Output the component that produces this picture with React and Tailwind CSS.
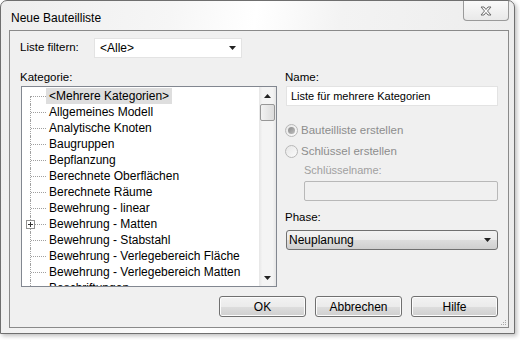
import React from "react";

const categories = [
	"<Mehrere Kategorien>",
	"Allgemeines Modell",
	"Analytische Knoten",
	"Baugruppen",
	"Bepflanzung",
	"Berechnete Oberflächen",
	"Berechnete Räume",
	"Bewehrung - linear",
	"Bewehrung - Matten",
	"Bewehrung - Stabstahl",
	"Bewehrung - Verlegebereich Fläche",
	"Bewehrung - Verlegebereich Matten",
	"Beschriftungen",
];

const Arrow = ({ up }) => (
	<svg width="7" height="4" viewBox="0 0 7 4">
		<path d={up ? "M0 4 L3.5 0 L7 4 Z" : "M0 0 L7 0 L3.5 4 Z"} fill="#222" />
	</svg>
);

const TreeRow = ({ label, index }) => (
	<div className="flex h-[16px] items-center">
		<div className="relative h-[16px] w-[24px] shrink-0">
			<div
				className={`absolute left-[8px] w-0 border-l border-dotted border-[#a0a0a0] ${
					index === 0 ? "top-[8px] h-[8px]" : "top-0 h-[16px]"
				}`}
			/>
			<div className="absolute left-[9px] top-[8px] h-0 w-[15px] border-t border-dotted border-[#a0a0a0]" />
			{label === "Bewehrung - Matten" && (
				<div className="absolute left-[4px] top-[4px] flex h-[9px] w-[9px] items-center justify-center border border-[#919191] bg-white">
					<div className="relative h-[5px] w-[5px]">
						<div className="absolute left-0 top-[2px] h-[1px] w-[5px] bg-[#333]" />
						<div className="absolute left-[2px] top-0 h-[5px] w-[1px] bg-[#333]" />
					</div>
				</div>
			)}
		</div>
		<span
			className={`whitespace-nowrap px-[3px] leading-[16px] ${
				index === 0 ? "bg-[#dedede]" : ""
			}`}
		>
			{label}
		</span>
	</div>
);

const Radio = ({ checked, label }) => (
	<div className="flex h-[21px] items-center">
		<div className="flex h-[13px] w-[13px] items-center justify-center rounded-full border border-[#b8b8b8] bg-gradient-to-br from-[#e6e6e6] to-[#fbfbfb]">
			{checked && (
				<div className="h-[7px] w-[7px] rounded-full bg-gradient-to-br from-[#8c8c8c] to-[#bdbdbd]" />
			)}
		</div>
		<span className="ml-[3px] text-[11.5px] text-[#8d8d8d]">{label}</span>
	</div>
);

const Button = ({ children }) => (
	<div className="flex h-[21px] w-[87px] items-center justify-center rounded-[3px] border border-[#707070] bg-[linear-gradient(#f2f2f2_0%,#ebebeb_50%,#dddddd_51%,#cfcfcf_100%)] shadow-[inset_0_0_0_1px_#fcfcfc]">
		{children}
	</div>
);

export default function App() {
	return (
		<div className="h-[340px] w-[520px] bg-white font-['Liberation_Sans',sans-serif] text-[12px] text-black">
			<div className="flex h-[334px] w-[515px] flex-col rounded-t-[7px] border border-[#6f6f6f] bg-[linear-gradient(100deg,#eeeeee_0%,#f6f6f6_30%,#ffffff_45%,#f3f3f3_60%,#ebebeb_100%)] shadow-[2px_2px_4px_rgba(0,0,0,0.25)]">
				<div className="flex h-[29px] items-start justify-between pl-[10px] pr-[5px]">
					<span className="mt-[8px] text-[12px]">Neue Bauteilliste</span>
					<div className="flex h-[20px] w-[46px] items-center justify-center rounded-b-[4px] border border-t-0 border-[#9a9a9a] bg-gradient-to-b from-[#fafafa] to-[#e9e9e9]">
						<svg width="12" height="10" viewBox="0 0 12 10">
							<path
								d="M1 1 L4 1 L6 3.5 L8 1 L11 1 L7.5 5 L11 9 L8 9 L6 6.5 L4 9 L1 9 L4.5 5 Z"
								fill="#fdfdfd"
								stroke="#6d6d6d"
								strokeWidth="1"
								strokeLinejoin="round"
							/>
						</svg>
					</div>
				</div>
				<div className="relative mb-[5px] ml-[8px] mr-[5px] flex flex-1 flex-col border border-[#8a8a8a] bg-[#f0f0f0] px-[10px] pt-[7px]">
					<div className="flex h-[20px] items-center">
						<span className="w-[74px] text-[11.5px]">Liste filtern:</span>
						<div className="flex h-[20px] w-[148px] items-center justify-between border border-[#e3e3e3] bg-white pl-[5px] pr-[5px]">
							<span>&lt;Alle&gt;</span>
							<Arrow />
						</div>
					</div>
					<div className="mt-[12px] flex gap-[8px]">
						<div className="flex w-[257px] flex-col">
							<span className="h-[16px] text-[11.5px] leading-[14px]">Kategorie:</span>
							<div className="ml-[1px] flex h-[201px] border border-[#828790] bg-white">
								<div className="flex-1 overflow-hidden pt-[1px]">
									{categories.map((c, i) => (
										<TreeRow key={c} label={c} index={i} />
									))}
								</div>
								<div className="flex w-[17px] flex-col items-center bg-[linear-gradient(90deg,#e6e6e6,#f4f4f4_20%,#f4f4f4_80%,#e6e6e6)]">
									<div className="flex h-[17px] items-center justify-center">
										<Arrow up />
									</div>
									<div className="h-[17px] w-[15px] rounded-[2px] border border-[#979797] bg-gradient-to-r from-[#f2f2f2] to-[#dcdcdc]" />
									<div className="flex-1" />
									<div className="flex h-[17px] items-center justify-center">
										<Arrow />
									</div>
								</div>
							</div>
						</div>
						<div className="flex flex-1 flex-col">
							<span className="h-[16px] text-[11.5px] leading-[14px]">Name:</span>
							<div className="ml-[1px] flex h-[20px] items-center border border-[#e3e3e3] bg-white pl-[4px] text-[11px]">
								Liste für mehrere Kategorien
							</div>
							<div className="mt-[14px]">
								<Radio checked label="Bauteilliste erstellen" />
								<Radio label="Schlüssel erstellen" />
							</div>
							<span className="ml-[19px] h-[17px] text-[11px] leading-[16px] text-[#a0a0a0]">
								Schlüsselname:
							</span>
							<div className="ml-[19px] mt-[2px] h-[20px] rounded-[2px] border border-[#b8b8b8] bg-[#f0f0f0]" />
							<span className="mt-[9px] h-[16px] text-[11.5px] leading-[14px]">Phase:</span>
							<div className="ml-[1px] mt-[4px] flex h-[20px] items-center justify-between rounded-[3px] border border-[#707070] bg-[linear-gradient(#f2f2f2_0%,#ebebeb_50%,#dddddd_51%,#cfcfcf_100%)] pl-[2px] pr-[6px]">
								<span>Neuplanung</span>
								<Arrow />
							</div>
						</div>
					</div>
					<div className="mt-[9px] flex justify-end gap-[9px]">
						<Button>OK</Button>
						<Button>Abbrechen</Button>
						<Button>Hilfe</Button>
					</div>
					{/* resize grip */}
					<svg className="absolute bottom-[1px] right-[1px]" width="8" height="8" viewBox="0 0 8 8">
						<rect x="6" y="2" width="1" height="1" fill="#a8a8a8" />
						<rect x="4" y="4" width="1" height="1" fill="#a8a8a8" />
						<rect x="6" y="4" width="1" height="1" fill="#a8a8a8" />
						<rect x="2" y="6" width="1" height="1" fill="#a8a8a8" />
						<rect x="4" y="6" width="1" height="1" fill="#a8a8a8" />
						<rect x="6" y="6" width="1" height="1" fill="#a8a8a8" />
					</svg>
				</div>
			</div>
		</div>
	);
}
